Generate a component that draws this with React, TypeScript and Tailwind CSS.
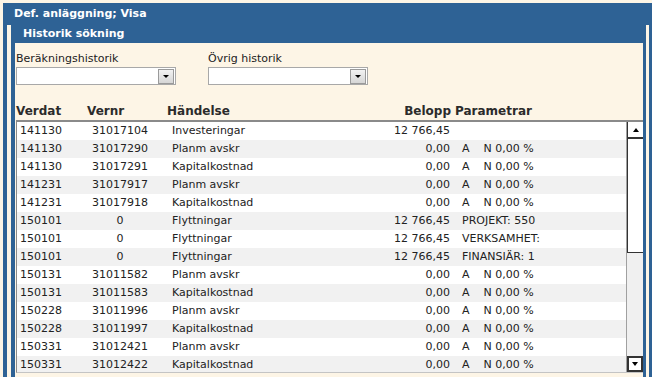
const rows: [string, string, string, string, string][] = [
  ['141130', '31017104', 'Investeringar', '12 766,45', ''],
  ['141130', '31017290', 'Planm avskr', '0,00', 'AN'],
  ['141130', '31017291', 'Kapitalkostnad', '0,00', 'AN'],
  ['141231', '31017917', 'Planm avskr', '0,00', 'AN'],
  ['141231', '31017918', 'Kapitalkostnad', '0,00', 'AN'],
  ['150101', '0', 'Flyttningar', '12 766,45', 'PROJEKT: 550'],
  ['150101', '0', 'Flyttningar', '12 766,45', 'VERKSAMHET:'],
  ['150101', '0', 'Flyttningar', '12 766,45', 'FINANSIÄR: 1'],
  ['150131', '31011582', 'Planm avskr', '0,00', 'AN'],
  ['150131', '31011583', 'Kapitalkostnad', '0,00', 'AN'],
  ['150228', '31011996', 'Planm avskr', '0,00', 'AN'],
  ['150228', '31011997', 'Kapitalkostnad', '0,00', 'AN'],
  ['150331', '31012421', 'Planm avskr', '0,00', 'AN'],
  ['150331', '31012422', 'Kapitalkostnad', '0,00', 'AN'],
];

const Select = () => (
  <div className="w-[160px] h-[18px] bg-white border border-[#a8a8a8] flex justify-end items-center pr-px">
    <div className="w-[16px] h-[15px] bg-gradient-to-b from-[#f2f2f2] to-[#d6d6d6] border border-[#9a9a9a] flex items-center justify-center">
      <div className="w-0 h-0 border-l-[3px] border-r-[3px] border-t-[3px] border-l-transparent border-r-transparent border-t-black" />
    </div>
  </div>
);

export default function App() {
  return (
    <div className="w-[652px] h-[377px] overflow-hidden bg-[#fdf5e6] pt-[3px] pl-[3px] font-['DejaVu_Sans',sans-serif]">
      <div className="h-full bg-[#2e6295] pl-[4px] pr-[3px] flex flex-col">
        {/* Rubrik */}
        <div className="h-[22px] shrink-0 pl-[7px] pt-[1px] flex items-center text-white font-bold text-[11px]">
          Def. anläggning; Visa
        </div>
        <div className="flex-1 bg-[#fdf5e6] pl-[4px] pr-[3px] flex flex-col">
          <div className="flex-1 bg-[#2e6295] pl-[4px] pr-[3px] flex flex-col">
            <div className="h-[18px] shrink-0 pl-[8px] flex items-center text-white font-bold text-[11px]">
              Historik sökning
            </div>
            <div className="flex-1 bg-[#fdf5e6] pl-px pt-[9px]">
              {/* Filter */}
              <div className="flex gap-[32px]">
                <div>
                  <div className="text-[11px] leading-[14px] text-[#222] mb-px">Beräkningshistorik</div>
                  <Select />
                </div>
                <div>
                  <div className="text-[11px] leading-[14px] text-[#222] mb-px">Övrig historik</div>
                  <Select />
                </div>
              </div>

              {/* Kolumnrubriker */}
              <div className="flex mt-[19px] text-[12px] leading-[14px] font-bold text-[#2b2b2b]">
                <div className="w-[71px]">Verdat</div>
                <div className="w-[80px]">Vernr</div>
                <div className="w-[200px]">Händelse</div>
                <div className="w-[84px] text-right">Belopp</div>
                <div className="pl-[4px]">Parametrar</div>
              </div>

              {/* Tabell */}
              <div className="mt-[2px] h-[253px] border-t-2 border-l border-[#8a8a8a] border-b border-b-[#c4c4c4] bg-white flex">
                <div className="flex-1 overflow-hidden">
                  {rows.map((r, i) => (
                    <div
                      key={i}
                      className={`flex h-[18px] items-center pt-px text-[11px] text-[#222] whitespace-nowrap ${i % 2 === 1 ? 'bg-[#f1f1f1]' : 'bg-white'}`}
                    >
                      <div className="w-[53px] pl-[3px]">{r[0]}</div>
                      <div className="w-[100px] text-center">{r[1]}</div>
                      <div className="w-[200px] pl-[2px]">{r[2]}</div>
                      <div className="w-[80px] text-right">{r[3]}</div>
                      <div className="pl-[12px] flex">
                        {r[4] === 'AN' ? (
                          <>
                            <span>A</span>
                            <span className="ml-[14px]">N 0,00 %</span>
                          </>
                        ) : (
                          <span>{r[4]}</span>
                        )}
                      </div>
                    </div>
                  ))}
                </div>

                {/* Rullningslist */}
                <div className="w-[17px] border-l border-[#a0a0a0] bg-[#f0f0f0] flex flex-col">
                  <div className="h-[131px] bg-white border-l border-b border-[#333]">
                    <div className="h-[17px] border-b-2 border-[#333] flex items-center justify-center">
                      <div className="w-0 h-0 border-l-[3px] border-r-[3px] border-b-[4px] border-l-transparent border-r-transparent border-b-black" />
                    </div>
                  </div>
                  <div className="flex-1" />
                  <div className="h-[16px] bg-white border-2 border-[#333] flex items-center justify-center">
                    <div className="w-0 h-0 border-l-[3px] border-r-[3px] border-t-[4px] border-l-transparent border-r-transparent border-t-black" />
                  </div>
                </div>
              </div>
            </div>
          </div>
        </div>
      </div>
    </div>
  );
}
